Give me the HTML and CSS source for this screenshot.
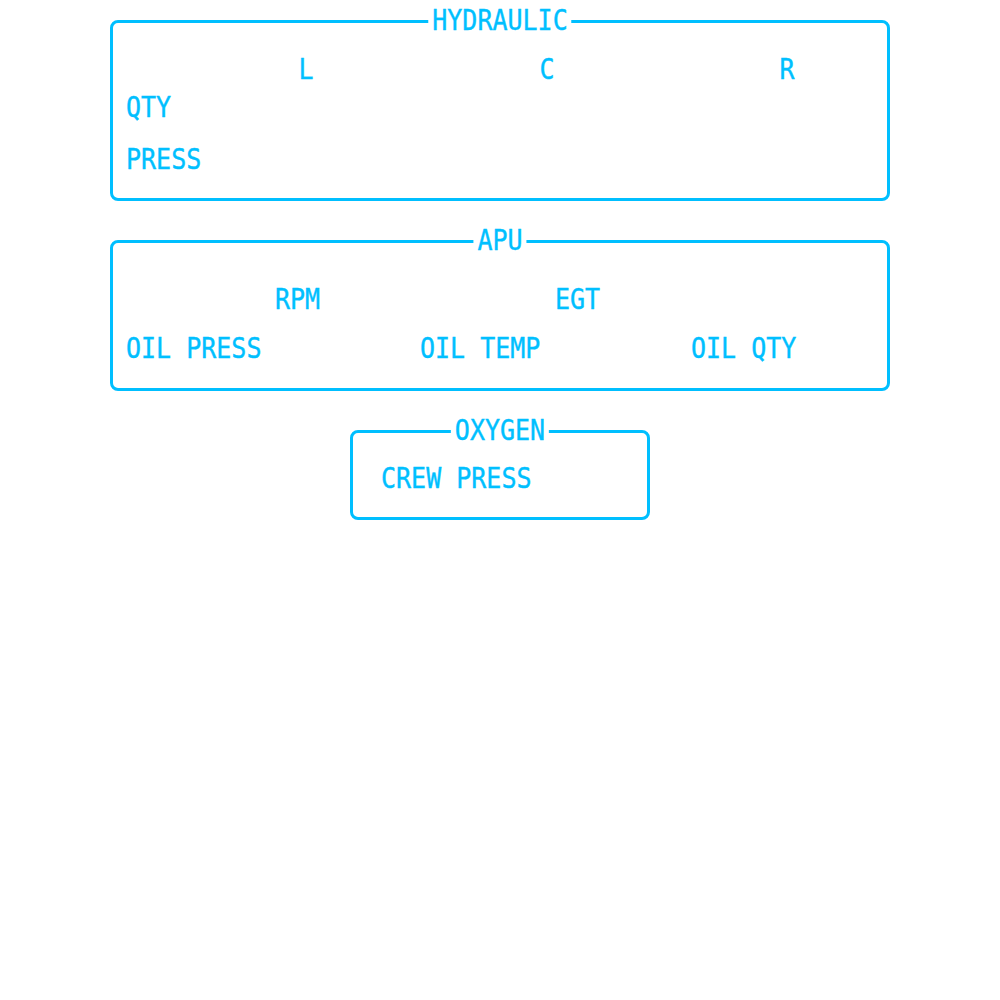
FILE: index.html
```html
<!DOCTYPE html>
<html>
<head>
<meta charset="utf-8">
<link rel="stylesheet" href="styles.css">
</head>
<body>
<div class="page">
  <section class="panel wide hyd">
    <h2 class="title">HYDRAULIC</h2>
    <div class="hyd-grid">
      <span></span><span class="lbl">L</span><span class="lbl">C</span><span class="lbl">R</span>
      <span class="lbl">QTY</span><span></span><span></span><span></span>
      <span class="lbl">PRESS</span><span></span><span></span><span></span>
    </div>
  </section>
  <section class="panel wide apu">
    <h2 class="title">APU</h2>
    <div class="apu-top">
      <span></span><span class="lbl">RPM</span><span class="lbl">EGT</span>
    </div>
    <div class="apu-bottom">
      <span class="lbl">OIL PRESS</span><span class="lbl">OIL TEMP</span><span class="lbl">OIL QTY</span>
    </div>
  </section>
  <section class="panel oxy">
    <h2 class="title">OXYGEN</h2>
    <div class="lbl">CREW PRESS</div>
  </section>
</div>
</body>
</html>
```
FILE: styles.css
```css
html, body {
  margin: 0;
  background: #ffffff;
}
body {
  font-family: "DejaVu Sans Mono", monospace;
  font-size: 25px;
  line-height: 30px;
  color: #00bfff;
}
.page {
  display: flex;
  flex-direction: column;
  align-items: center;
  padding-top: 20px;
  gap: 39px;
}
.panel {
  position: relative;
  border: 3px solid #00bfff;
  border-radius: 8px;
  box-sizing: border-box;
}
.wide {
  width: 780px;
}
.title {
  position: absolute;
  top: -17px;
  left: 50%;
  margin: 0;
  padding: 0 4px;
  background: #ffffff;
  font-size: 25px;
  font-weight: normal;
  line-height: 30px;
  white-space: nowrap;
  -webkit-text-stroke: 0.35px #00bfff;
  transform: translateX(-50%) scaleY(1.15);
}
.lbl {
  display: block;
  white-space: nowrap;
  -webkit-text-stroke: 0.35px #00bfff;
  transform: scaleY(1.15);
}
.hyd {
  height: 181px;
  padding: 32px 13px 0 13px;
}
.hyd-grid {
  display: grid;
  grid-template-columns: 172.5px 241px 240px 1fr;
  grid-template-rows: 39px 51px 30px;
}
.apu {
  height: 151px;
  padding: 42px 13px 0 13px;
  display: flex;
  flex-direction: column;
  gap: 19px;
}
.apu-top {
  display: grid;
  grid-template-columns: 149px 280px 1fr;
}
.apu-bottom {
  display: grid;
  grid-template-columns: 294px 271px 1fr;
}
.oxy {
  width: 300px;
  height: 90px;
  padding: 31px 28px 0 28px;
}
```
